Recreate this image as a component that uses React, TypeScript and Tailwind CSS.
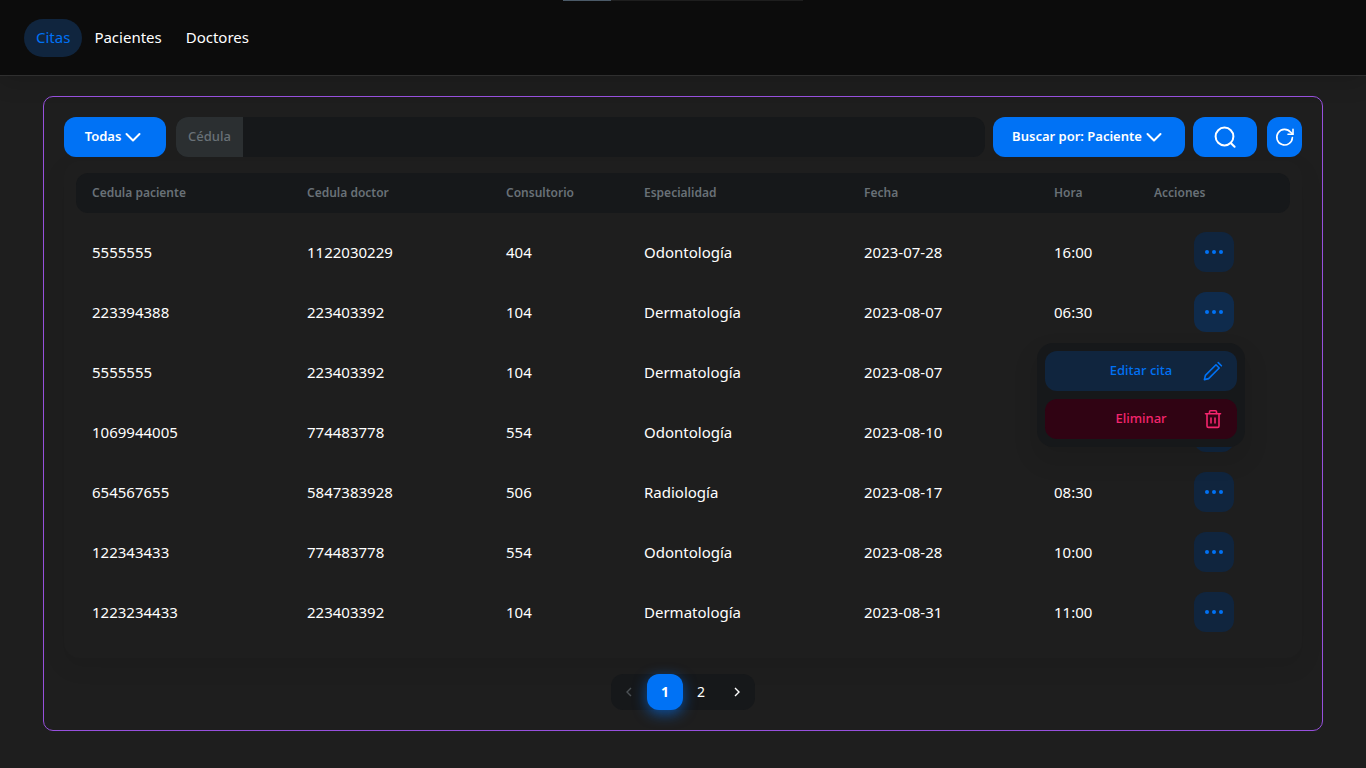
import { useState } from "react";
import type { ReactNode } from "react";

type Cita = {
  paciente: string;
  doctor: string;
  consultorio: string;
  especialidad: string;
  fecha: string;
  hora: string;
};

const links = ["Citas", "Pacientes", "Doctores"];

const citas: Cita[] = [
  { paciente: "5555555", doctor: "1122030229", consultorio: "404", especialidad: "Odontología", fecha: "2023-07-28", hora: "16:00" },
  { paciente: "223394388", doctor: "223403392", consultorio: "104", especialidad: "Dermatología", fecha: "2023-08-07", hora: "06:30" },
  { paciente: "5555555", doctor: "223403392", consultorio: "104", especialidad: "Dermatología", fecha: "2023-08-07", hora: "" },
  { paciente: "1069944005", doctor: "774483778", consultorio: "554", especialidad: "Odontología", fecha: "2023-08-10", hora: "" },
  { paciente: "654567655", doctor: "5847383928", consultorio: "506", especialidad: "Radiología", fecha: "2023-08-17", hora: "08:30" },
  { paciente: "122343433", doctor: "774483778", consultorio: "554", especialidad: "Odontología", fecha: "2023-08-28", hora: "10:00" },
  { paciente: "1223234433", doctor: "223403392", consultorio: "104", especialidad: "Dermatología", fecha: "2023-08-31", hora: "11:00" },
];

const columns = [
  { name: "Cedula paciente", width: "w-[215px]" },
  { name: "Cedula doctor", width: "w-[199px]" },
  { name: "Consultorio", width: "w-[138px]" },
  { name: "Especialidad", width: "w-[220px]" },
  { name: "Fecha", width: "w-[190px]" },
  { name: "Hora", width: "w-[100px]" },
  { name: "Acciones", width: "w-[152px]" },
];

function ChevronDown() {
  return (
    <svg width="16" height="16" viewBox="0 0 16 16" fill="none" stroke="currentColor" strokeWidth="2" strokeLinecap="round" strokeLinejoin="round">
      <path d="M1.5 5l6.5 6.5L14.5 5" />
    </svg>
  );
}

function SearchIcon() {
  return (
    <svg width="24" height="24" viewBox="0 0 24 24" fill="none" stroke="currentColor" strokeWidth="2" strokeLinecap="round">
      <circle cx="11.5" cy="11.5" r="8.9" />
      <path d="M18 18.2l3.6 3.6" />
    </svg>
  );
}

function ReloadIcon() {
  return (
    <svg width="20" height="20" viewBox="0 0 20 20" fill="none" stroke="currentColor" strokeWidth="1.6" strokeLinecap="round">
      <path d="M17.4 10.6A7.8 7.8 0 1 1 15.6 5.2L17.6 7" />
      <path d="M18 2.2V7.2H13" />
    </svg>
  );
}

function PencilIcon() {
  return (
    <svg width="20" height="20" viewBox="0 0 20 20" fill="none" stroke="currentColor" strokeWidth="1.6" strokeLinecap="round" strokeLinejoin="round">
      <path d="M13 3.8l3.2 3.2L5.6 17.6l-4.2 1 1-4.2z" />
      <path d="M15.2 1.6l3.2 3.2" />
    </svg>
  );
}

function TrashIcon() {
  return (
    <svg width="20" height="20" viewBox="0 0 20 20" fill="none" stroke="currentColor" strokeWidth="1.6" strokeLinecap="round" strokeLinejoin="round">
      <path d="M2.5 4.8h15" />
      <path d="M6.5 4.5V2.8q0-1 1-1h5q1 0 1 1v1.7" />
      <path d="M4 5v12q0 1.4 1.4 1.4h9.2q1.4 0 1.4-1.4V5" />
      <path d="M8 9v5M12 9v5" />
    </svg>
  );
}

function DotsIcon() {
  return (
    <svg width="20" height="20" viewBox="0 0 20 20" fill="currentColor">
      <circle cx="3" cy="10" r="2" />
      <circle cx="10" cy="10" r="2" />
      <circle cx="17" cy="10" r="2" />
    </svg>
  );
}

function Arrow({ d }: { d: string }) {
  return (
    <svg width="12" height="12" viewBox="0 0 12 12" fill="none" stroke="currentColor" strokeWidth="1.4">
      <path d={d} />
    </svg>
  );
}

function MenuItem({ label, icon, color }: { label: string; icon: ReactNode; color: string }) {
  return (
    <button
      role="menuitem"
      className={`grid h-10 grid-cols-[20px_1fr_20px] items-center rounded-xl px-3.5 text-[13px] font-medium ${color}`}
    >
      <span className="col-start-2 text-center">{label}</span>
      {icon}
    </button>
  );
}

function ActionsMenu() {
  return (
    <div
      role="menu"
      className="absolute top-[51px] -right-[11px] z-10 flex w-52 flex-col gap-2 rounded-2xl bg-[#16181a] p-2 shadow-[0_12px_20px_6px_rgba(0,0,0,0.08)]"
    >
      <MenuItem label="Editar cita" icon={<PencilIcon />} color="bg-[#10253e] text-[#0072f5]" />
      <MenuItem label="Eliminar" icon={<TrashIcon />} color="bg-[#300313] text-[#f4256d]" />
    </div>
  );
}

export default function App() {
  const [openRow, setOpenRow] = useState<number | null>(1);
  const [page, setPage] = useState(1);

  return (
    <div className="min-h-screen bg-[#1e1e1e] font-['Noto_Sans','Open_Sans',sans-serif] text-[15px] text-white">
      <header className="flex h-[76px] items-center border-b border-[#2f2f2f] bg-[#0c0c0c] px-6 shadow-[0_8px_20px_rgba(0,0,0,0.12)]">
        <div className="absolute inset-x-0 top-0 mx-auto flex h-px w-60 bg-[#1e1e1e]">
          <div className="w-1/5 bg-[#4b5a68]" />
        </div>
        <nav className="flex">
          {links.map((link) => (
            <a
              key={link}
              href="#"
              className={
                link === "Citas"
                  ? "flex h-[38px] items-center rounded-full bg-[#10253e] px-3 text-[#0072f5]"
                  : "flex h-[38px] items-center px-3"
              }
            >
              {link}
            </a>
          ))}
        </nav>
      </header>

      <main className="mx-auto mt-5 max-w-7xl rounded-[10px] border border-[#9750dd] p-5">
        <div className="flex h-10 text-[13px] font-semibold">
          <button className="flex w-[102px] items-center justify-center gap-1 rounded-xl bg-[#0072f5] pr-1">
            Todas
            <ChevronDown />
          </button>
          <div className="ml-2.5 flex flex-1 overflow-hidden rounded-xl bg-[#16181a]">
            <label htmlFor="cedula" className="flex w-[67px] items-center justify-center bg-[#2b2f31] font-medium text-[#697177]">
              Cédula
            </label>
            <input id="cedula" className="min-w-0 flex-1 bg-transparent px-3 outline-none" />
          </div>
          <button className="ml-2 flex w-48 items-center justify-center gap-1 rounded-xl bg-[#0072f5] pr-1">
            Buscar por: Paciente
            <ChevronDown />
          </button>
          <button aria-label="Buscar" className="ml-2 flex w-16 items-center justify-center rounded-xl bg-[#0072f5]">
            <SearchIcon />
          </button>
          <button aria-label="Recargar" className="ml-2.5 flex w-[35px] items-center justify-center rounded-xl bg-[#0072f5]">
            <ReloadIcon />
          </button>
        </div>

        <section className="mt-1 rounded-2xl px-3 pt-3 pb-4 shadow-[0_8px_20px_4px_rgba(0,0,0,0.06)]">
          <table className="w-full table-fixed border-separate border-spacing-0 text-left">
            <thead>
              <tr className="h-10 text-xs text-[#697177]">
                {columns.map((column) => (
                  <th key={column.name} className={`bg-[#16181a] pl-4 font-semibold first:rounded-l-xl last:rounded-r-xl ${column.width}`}>
                    {column.name}
                  </th>
                ))}
              </tr>
            </thead>
            <tbody>
              <tr aria-hidden="true" className="h-[9px]" />
              {citas.map((cita, i) => (
                <tr key={i} className="h-[60px]">
                  <td className="pl-4">{cita.paciente}</td>
                  <td className="pl-4">{cita.doctor}</td>
                  <td className="pl-4">{cita.consultorio}</td>
                  <td className="pl-4">{cita.especialidad}</td>
                  <td className="pl-4">{cita.fecha}</td>
                  <td className="pl-4">{cita.hora}</td>
                  <td>
                    <div className="relative mx-auto w-10">
                      <button
                        aria-label="Acciones"
                        aria-expanded={openRow === i}
                        onClick={() => setOpenRow(openRow === i ? null : i)}
                        className={`flex h-10 w-10 items-center justify-center rounded-xl text-[#0072f5] ${openRow === i ? "bg-[#0f2b4c]" : "bg-[#10253e]"}`}
                      >
                        <DotsIcon />
                      </button>
                      {openRow === i && <ActionsMenu />}
                    </div>
                  </td>
                </tr>
              ))}
            </tbody>
          </table>
        </section>

        <nav aria-label="Paginación" className="mx-auto mt-4 flex h-9 w-36 rounded-xl bg-[#16181a] text-sm">
          <button aria-label="Anterior" disabled={page === 1} className="flex w-9 items-center justify-center disabled:text-[#4c5155]">
            <Arrow d="M8 2L4 6l4 4" />
          </button>
          {[1, 2].map((n) => (
            <button
              key={n}
              onClick={() => setPage(n)}
              className={page === n ? "w-9 rounded-xl bg-[#0072f5] font-bold shadow-[0_4px_14px_rgba(0,114,245,0.6)]" : "w-9"}
            >
              {n}
            </button>
          ))}
          <button aria-label="Siguiente" disabled={page === 2} className="flex w-9 items-center justify-center disabled:text-[#4c5155]">
            <Arrow d="M4 2l4 4-4 4" />
          </button>
        </nav>
      </main>
    </div>
  );
}
